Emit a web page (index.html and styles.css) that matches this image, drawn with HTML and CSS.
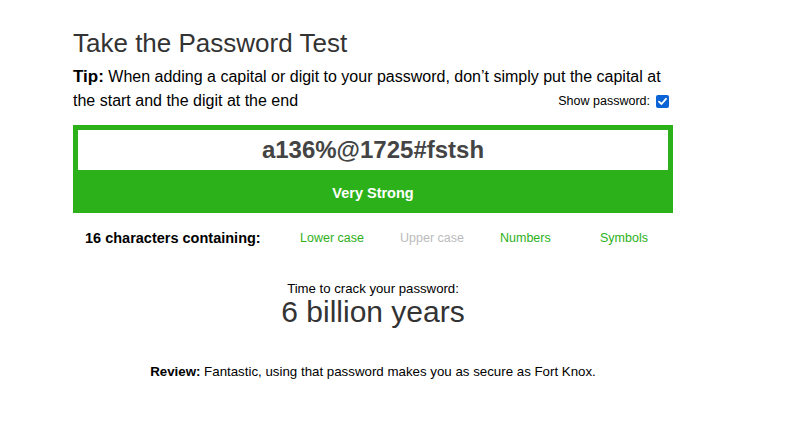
FILE: index.html
```html
<!DOCTYPE html>
<html>
<head>
<meta charset="utf-8">
<link rel="stylesheet" href="styles.css">
</head>
<body>
<div class="wrap">
  <h1 class="title">Take the Password Test</h1>
  <p class="tip"><b>Tip:</b> When adding a capital or digit to your password, don’t simply put the capital at the start and the digit at the end<label class="show">Show password: <span class="check"><svg width="13" height="13" viewBox="0 0 13 13"><rect x="0" y="0" width="13" height="13" rx="2" fill="#0b63d6"/><path d="M3 6.6 L5.5 9 L10 3.8" fill="none" stroke="#fff" stroke-width="1.8" stroke-linecap="round" stroke-linejoin="round"/></svg></span></label></p>
  <div class="meter">
    <div class="pw">a136%@1725#fstsh</div>
    <div class="strength">Very Strong</div>
  </div>
  <div class="contains">
    <div class="count">16 characters containing:</div>
    <div class="crit on">Lower case</div>
    <div class="crit off">Upper case</div>
    <div class="crit on">Numbers</div>
    <div class="crit on">Symbols</div>
  </div>
  <div class="crack">
    <div class="crack-label">Time to crack your password:</div>
    <div class="crack-time">6 billion years</div>
  </div>
  <p class="review"><b>Review:</b> Fantastic, using that password makes you as secure as Fort Knox.</p>
</div>
</body>
</html>
```
FILE: styles.css
```css
html, body { margin: 0; padding: 0; background: #fff; }
body { font-family: "Liberation Sans", Arial, sans-serif; color: #000; }
.wrap { width: 600px; margin-left: 73px; padding-top: 27px; }
.title { font-size: 26px; font-weight: normal; color: #333; margin: 0; line-height: 32px; }
.tip { font-size: 16px; line-height: 24px; margin: 6px 0 0 0; }
.tip b { font-size: 17px; }
.show { float: right; font-size: 12.5px; line-height: 13px; display: flex; align-items: center; gap: 6px; margin: 6px 4px 0 0; }
.check { display: inline-flex; }
.meter { background: #2db11a; padding: 5px 5px 0 5px; margin-top: 12px; }
.pw { background: #fff; height: 40px; line-height: 40px; text-align: center; font-size: 24px; font-weight: bold; color: #444; }
.strength { height: 39px; padding-top: 4px; line-height: 39px; text-align: center; color: #fff; font-weight: bold; font-size: 14.5px; }
.contains { display: grid; grid-template-columns: 215px 100px 100px 100px 100px; padding-left: 12px; margin-top: 17px; font-size: 12.5px; align-items: center; }
.count { font-weight: bold; font-size: 14.5px; }
.crit.on { color: #2db11a; }
.crit.off { color: #bbb; }
.crack { text-align: center; margin-top: 36px; }
.crack-label { font-size: 13.2px; line-height: 14px; }
.crack-time { font-size: 30px; line-height: 32px; color: #333; }
.review { text-align: center; font-size: 13.3px; margin: 36px 0 0 0; }
```
